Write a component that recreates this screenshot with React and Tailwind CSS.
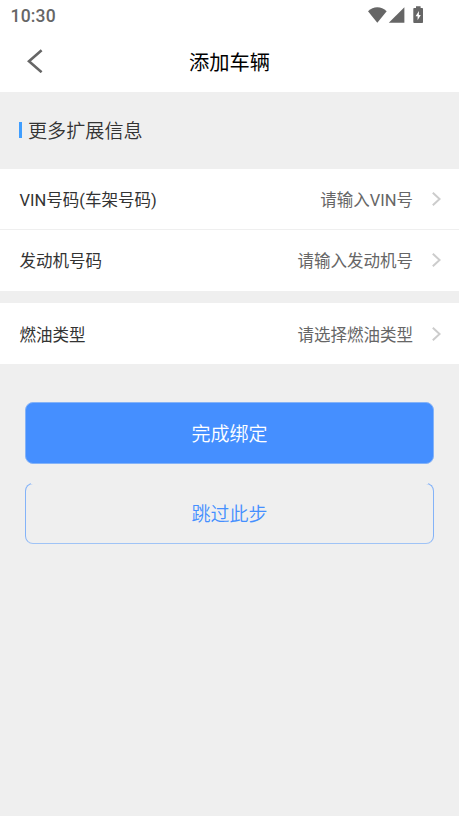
function Chevron() {
  return (
    <svg className="ml-[19px] h-[14px] w-[9px] shrink-0" viewBox="0 0 9 14" fill="none" stroke="#cccccc" strokeWidth="2">
      <path d="M0.8 0.8 7.6 7 0.8 13.2" />
    </svg>
  );
}

function Row({ label, hint }) {
  return (
    <div className="flex items-center pr-[18px] pl-[19.5px] text-[16.5px] leading-6">
      <span className="flex-1 pt-[3px] text-[#333333]">{label}</span>
      <span className="pt-[3px] text-[#666666]">{hint}</span>
      <Chevron />
    </div>
  );
}

export default function App() {
  return (
    <div className="flex h-[816px] w-[459px] flex-col overflow-hidden bg-[#efefef] font-[Roboto,'Noto_Sans_CJK_SC',sans-serif]">
      <header className="h-[92px] shrink-0 bg-white">
        <div className="flex h-[31px] items-center justify-between pr-[35px] pl-[10.5px]">
          <span className="pt-px text-[17.5px] leading-[31px] font-medium tracking-[0.2px] text-[#666666]">10:30</span>
          <svg className="mb-px h-[18px] w-[57px]" viewBox="367 6 57 18" fill="#666666">
            <path d="M368 11.2C373.4 5.9 381.2 5.9 386.7 11.2L377.3 22.8Z" />
            <path d="M404.4 7.2V22.8H388.8Z" />
            <path fillRule="evenodd" d="M416 6.3H420.6V8H422C422.6 8 423 8.4 423 9V21.9C423 22.5 422.6 23 422 23H414.4C413.8 23 413.3 22.5 413.3 21.9V9C413.3 8.4 413.8 8 414.4 8H416ZM418.9 11 415.6 16.2H417.6V20.3L420.8 15H418.9Z" />
          </svg>
        </div>
        <div className="grid h-[61px] grid-cols-[80px_1fr_80px] items-center">
          <svg className="mb-px ml-[27px] h-[24px] w-[16px]" viewBox="0 0 16 24" fill="none" stroke="#666666" strokeWidth="2.6">
            <path d="M14.6 1.2 2 12.3 14.6 23.2" />
          </svg>
          <h1 className="pt-[3px] text-center text-[20.3px] leading-[58px] font-normal text-black">添加车辆</h1>
        </div>
      </header>

      <div className="flex h-[77px] shrink-0 items-center pl-[19px]">
        <i className="mb-px mr-[6px] h-4 w-[3px] bg-[#409eff]" />
        <h2 className="pt-[2px] text-[19.1px] leading-6 font-[350] text-[#333333]">更多扩展信息</h2>
      </div>

      <section className="shrink-0 bg-white">
        <div className="grid h-[61px] items-center border-b border-[#efefef]"><Row label="VIN号码(车架号码)" hint="请输入VIN号" /></div>
        <div className="grid h-[61px] items-center pb-px"><Row label="发动机号码" hint="请输入发动机号" /></div>
      </section>
      <section className="mt-3 grid h-[61px] shrink-0 items-center bg-white pt-px">
        <Row label="燃油类型" hint="请选择燃油类型" />
      </section>

      <div className="flex flex-col gap-[19px] px-[25px] pt-[38px] text-[19px]">
        <button className="h-[62px] rounded-lg border border-[#84b3f8] bg-[#458fff] pt-[4px] font-[350] text-white">完成绑定</button>
        <button className="relative h-[61px] rounded-lg border border-[#84b3f8] border-b-[#9fc3f6] pt-[3px] font-[350] text-[#458fff]">
          <span className="absolute inset-x-[5px] -top-px h-px bg-[#efefef]" />
          跳过此步
        </button>
      </div>
    </div>
  );
}
